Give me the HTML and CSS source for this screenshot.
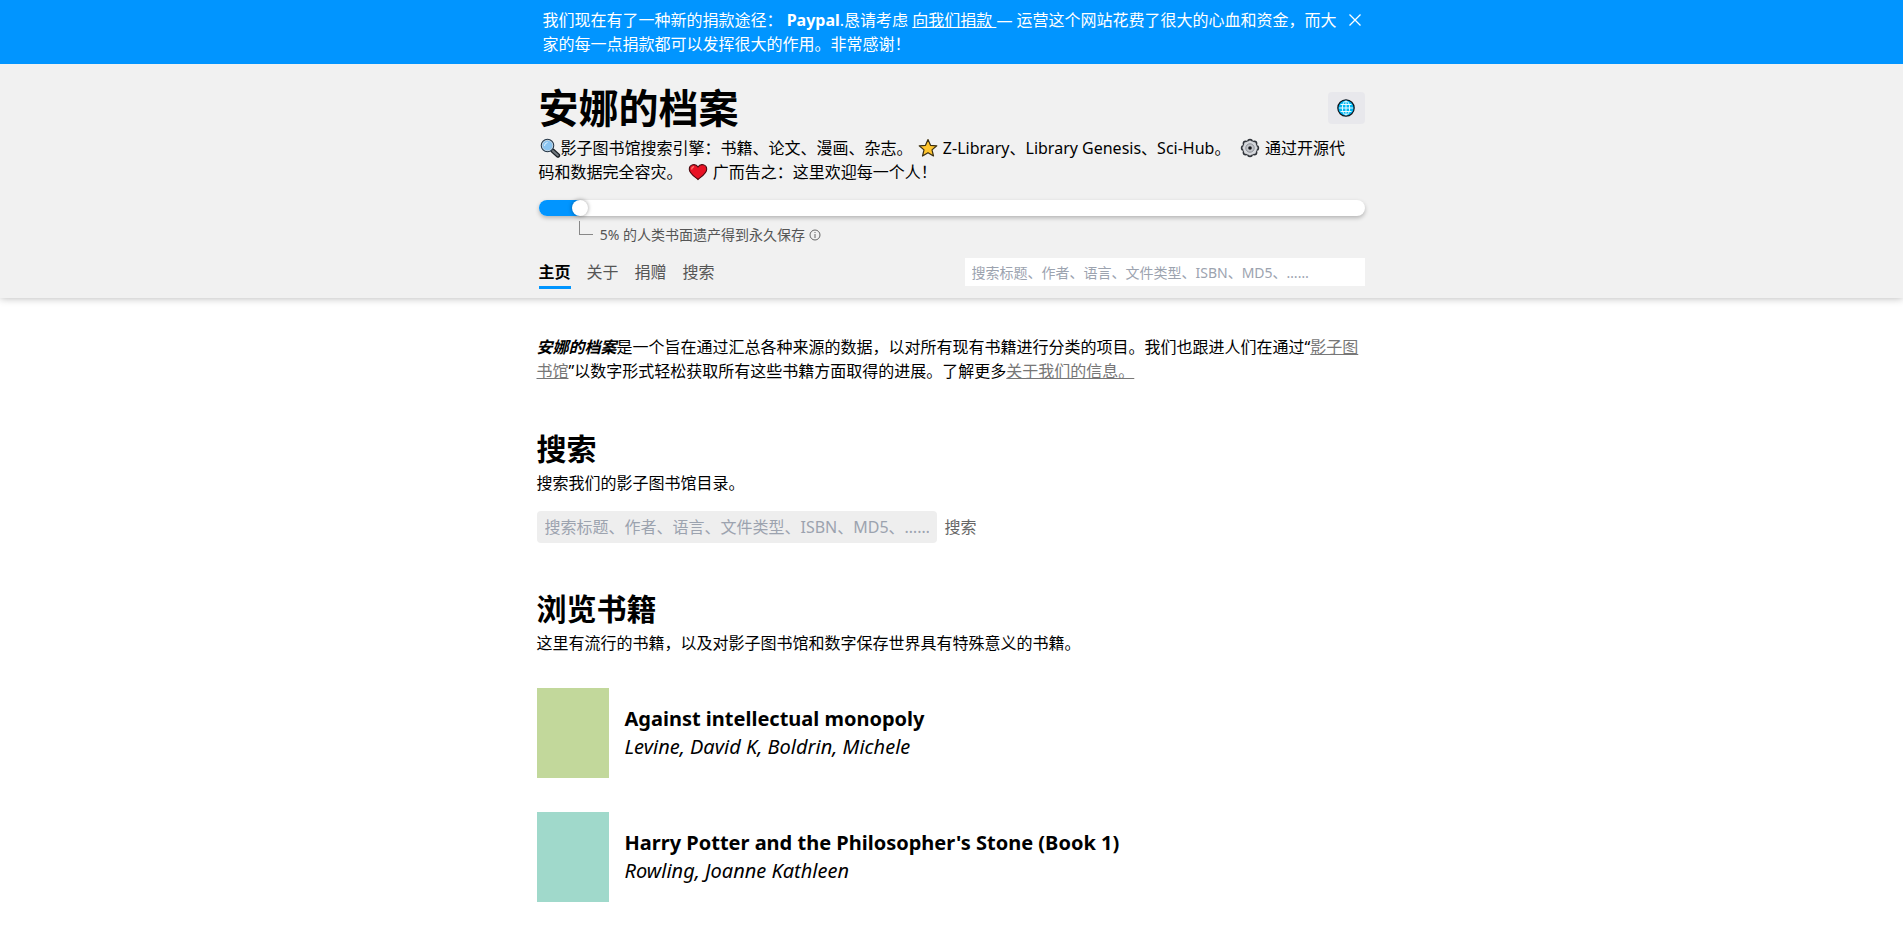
FILE: index.html
```html
<!DOCTYPE html>
<html lang="zh-CN">
<head>
<meta charset="utf-8">
<meta name="viewport" content="width=device-width, initial-scale=1">
<title>安娜的档案</title>
<link rel="stylesheet" href="styles.css">
</head>
<body>
<div class="banner">
  <div class="banner-inner">
    <div class="banner-text">我们现在有了一种新的捐款途径： <strong>Paypal</strong>.恳请考虑 <a href="#donate">向我们捐款 </a>— 运营这个网站花费了很大的心血和资金，而大家的每一点捐款都可以发挥很大的作用。非常感谢！</div>
    <button class="banner-close" type="button" aria-label="关闭">
      <svg viewBox="0 0 12 12" width="12" height="12"><path d="M.5.5l11 11M11.500.5l-11 11" stroke="currentColor" stroke-width="1.300" fill="none"/></svg>
    </button>
  </div>
</div>

<header class="header">
  <div class="header-inner">
    <div class="title-row">
      <h1 class="site-title">安娜的档案</h1>
      <button class="lang-button" type="button" aria-label="语言">
        <svg viewBox="0 0 18 18" width="18" height="18"><circle cx="9" cy="9" r="8.200" fill="#00b7f4" stroke="#10131a" stroke-width="1.200"/><g fill="none" stroke="#e9fbff" stroke-width="1"><path d="M9 2v14M2 9h14M3.500 5.500h11M3.500 12.500h11"/><ellipse cx="9" cy="9" rx="3.700" ry="6.900"/></g></svg>
      </button>
    </div>
    <p class="tagline"><svg class="emoji" viewBox="0 0 22 20"><path d="M13.500 12.500l5.500 5" stroke="#1c2126" stroke-width="4.400" stroke-linecap="round"/><path d="M14 13l4.800 4.300" stroke="#6f777d" stroke-width="2.200" stroke-linecap="round"/><circle cx="8.500" cy="7.500" r="6.200" fill="#8ac4f0" stroke="#2a3a4a" stroke-width="1.200"/><circle cx="8.500" cy="7.500" r="5.200" fill="none" stroke="#c3d3df" stroke-width="1"/><path d="M5.500 8a3.500 3.500 0 0 1 3-3.500" stroke="#dff1ff" stroke-width="1" fill="none"/></svg>影子图书馆搜索引擎：书籍、论文、漫画、杂志。 <svg class="emoji" viewBox="0 0 22 20"><path d="M11 1.500l2.500 5.800 6.300.5-4.800 4.100 1.500 6.100L11 14.700 5.500 18 7 11.900 2.200 7.800l6.300-.5z" fill="#ffc52e" stroke="#3c3012" stroke-width="1.200" stroke-linejoin="round"/></svg> Z-Library、Library Genesis、Sci-Hub。&nbsp; <svg class="emoji" viewBox="0 0 22 20"><g fill="#d6d8dc" stroke="#30343a" stroke-width="1.600"><circle cx="11" cy="3.800" r="2.200"/><circle cx="15.400" cy="5.600" r="2.200"/><circle cx="17.200" cy="10" r="2.200"/><circle cx="15.400" cy="14.400" r="2.200"/><circle cx="11" cy="16.200" r="2.200"/><circle cx="6.600" cy="14.400" r="2.200"/><circle cx="4.800" cy="10" r="2.200"/><circle cx="6.600" cy="5.600" r="2.200"/></g><circle cx="11" cy="10" r="7" fill="#d6d8dc"/><circle cx="11" cy="10" r="4.200" fill="#c3c5ca" stroke="#8b8f95" stroke-width="1"/><circle cx="11" cy="10" r="1.800" fill="#15171a"/></svg> 通过开源代码和数据完全容灾。 <svg class="emoji" viewBox="0 0 22 20"><path d="M11 17.500C8 14.800 2.300 11.500 2.300 7.200 2.300 2.500 8.500 1 11 5c2.500-4 8.700-2.500 8.700 2.200 0 4.300-5.700 7.600-8.700 10.300z" fill="#e81224" stroke="#4c0a10" stroke-width="1.100"/><path d="M4.700 7.500c0-1.800 1-2.700 2.400-2.900" stroke="#ff7a70" stroke-width="1.200" fill="none"/></svg> 广而告之：这里欢迎每一个人！</p>
    <div class="progress" role="progressbar" aria-valuenow="5" aria-valuemin="0" aria-valuemax="100" aria-label="5%">
      <div class="progress-fill" style="width:5%"></div>
    </div>
    <div class="progress-note">
      <span class="elbow"></span>
      <span>5% 的人类书面遗产得到永久保存</span>
      <svg viewBox="0 0 12 12" width="12" height="12"><circle cx="6" cy="6" r="5" fill="none" stroke="#666"/><path d="M6 5v4M6 3v1" stroke="#666"/></svg>
    </div>
    <div class="nav-row">
      <nav class="nav">
        <a class="active" href="#home">主页</a>
        <a href="#about">关于</a>
        <a href="#donate">捐赠</a>
        <a href="#search">搜索</a>
      </nav>
      <input class="header-search" type="text" aria-label="搜索" placeholder="搜索标题、作者、语言、文件类型、ISBN、MD5、……">
    </div>
  </div>
</header>

<main class="main">
  <p class="intro"><strong><em>安娜的档案</em></strong>是一个旨在通过汇总各种来源的数据，以对所有现有书籍进行分类的项目。我们也跟进人们在通过“<a href="#shadow">影子图书馆</a>”以数字形式轻松获取所有这些书籍方面取得的进展。了解更多<a href="#about">关于我们的信息。 </a></p>

  <section class="section" id="search">
    <h2>搜索</h2>
    <p>搜索我们的影子图书馆目录。</p>
    <form class="search-form">
      <input type="text" aria-label="搜索" placeholder="搜索标题、作者、语言、文件类型、ISBN、MD5、……">
      <button type="button">搜索</button>
    </form>
  </section>

  <section class="section">
    <h2>浏览书籍</h2>
    <p>这里有流行的书籍，以及对影子图书馆和数字保存世界具有特殊意义的书籍。</p>
    <div class="books">
      <a class="book" href="#book-1">
        <span class="cover cover-green"></span>
        <span class="book-info"><span class="book-title">Against intellectual monopoly</span><span class="book-author">Levine, David K, Boldrin, Michele</span></span>
      </a>
      <a class="book" href="#book-2">
        <span class="cover cover-teal"></span>
        <span class="book-info"><span class="book-title">Harry Potter and the Philosopher's Stone (Book 1)</span><span class="book-author">Rowling, Joanne Kathleen</span></span>
      </a>
    </div>
  </section>
</main>
</body>
</html>
```
FILE: styles.css
```css
* { box-sizing: border-box; }

body {
  margin: 0;
  background: #fff;
  color: #000;
  font: 16px/24px "Noto Sans", "Noto Sans CJK SC", sans-serif;
}

h1, h2, p { margin: 0; }
a { color: inherit; }

input, button {
  font: inherit;
  border: 0;
  margin: 0;
}

input::placeholder { color: #9ca3af; opacity: 1; }

.banner { background: #0195ff; color: #fff; }

.banner-inner {
  display: flex;
  align-items: flex-start;
  max-width: 826px;
  margin: 0 auto;
  padding: 8px 4px;
}

.banner-text { flex: 1; }

.banner-close {
  display: flex;
  flex: none;
  padding: 6px 0 6px 6px;
  background: none;
  color: inherit;
}

.header {
  background: #f1f1f1;
  box-shadow: 0 0 8px rgba(0, 0, 0, .3);
  clip-path: inset(0 0 -12px 0);
}

.header-inner {
  max-width: 826px;
  margin: 0 auto;
  padding: 24px 0 9px;
}

.title-row {
  display: flex;
  align-items: center;
  justify-content: space-between;
}

.site-title { font-size: 40px; line-height: 40px; font-weight: 700; }

.lang-button {
  display: flex;
  padding: 7px 10px 7px 9px;
  border-radius: 4px;
  background: #e8e8ec;
}

.tagline { margin-top: 8px; padding-right: 10px; }

.emoji {
  width: 22px;
  height: 20px;
  vertical-align: -4px;
}

.progress {
  height: 16px;
  margin-top: 16px;
  border-radius: 8px;
  background: #fff;
  box-shadow: 0 2px 4px rgba(0, 0, 0, .25);
}

.progress-fill {
  position: relative;
  height: 16px;
  border-radius: 8px 0 0 8px;
  background: #0195ff;
}

.progress-fill::after {
  content: "";
  position: absolute;
  top: 0;
  right: -8px;
  width: 16px;
  height: 16px;
  border-radius: 50%;
  background: #fff;
  box-shadow: 0 0 4px rgba(0, 0, 0, .4);
}

.progress-note {
  display: flex;
  align-items: center;
  gap: 4px;
  margin: 9px 0 13px 5%;
  color: #555;
  font-size: 14px;
  line-height: 20px;
}

.elbow {
  align-self: flex-start;
  width: 14px;
  height: 14px;
  margin: -4px 3px 0 -1px;
  border: solid #888;
  border-width: 0 0 1px 1px;
}

.nav-row {
  display: flex;
  align-items: flex-start;
  justify-content: space-between;
}

.nav { display: flex; gap: 16px; padding-top: 2px; }

.nav a {
  padding-bottom: 2px;
  border-bottom: 3px solid transparent;
  color: #555;
  text-decoration: none;
}

.nav .active { border-color: #0195ff; color: #000; font-weight: 700; }

.header-search {
  width: 400px;
  height: 28px;
  padding: 0 7px;
  background: #fff;
  font-size: 14px;
}

.main {
  max-width: 830px;
  margin: 0 auto;
  padding-top: 37px;
}

.intro a { color: #777; }

.section { margin-top: 48px; }
.section h2 { font-size: 30px; line-height: 36px; font-weight: 700; }
.section p { margin-top: 4px; }

.search-form { display: flex; gap: 8px; margin-top: 16px; }

.search-form input {
  width: 400px;
  height: 32px;
  padding: 0 8px;
  border-radius: 4px;
  background: #eee;
}

.search-form button { padding: 0; background: none; color: #666; }

.books {
  display: flex;
  flex-direction: column;
  gap: 34px;
  margin-top: 33px;
}

.book {
  display: flex;
  align-items: center;
  gap: 16px;
  text-decoration: none;
}

.cover { flex: none; width: 72px; height: 90px; }
.cover-green { background: #c2d89b; }
.cover-teal { background: #a0d9cb; }

.book-info { display: flex; flex-direction: column; line-height: 28px; }
.book-title { font-size: 20px; font-weight: 700; }
.book-author { font-size: 20px; font-style: italic; }
```
